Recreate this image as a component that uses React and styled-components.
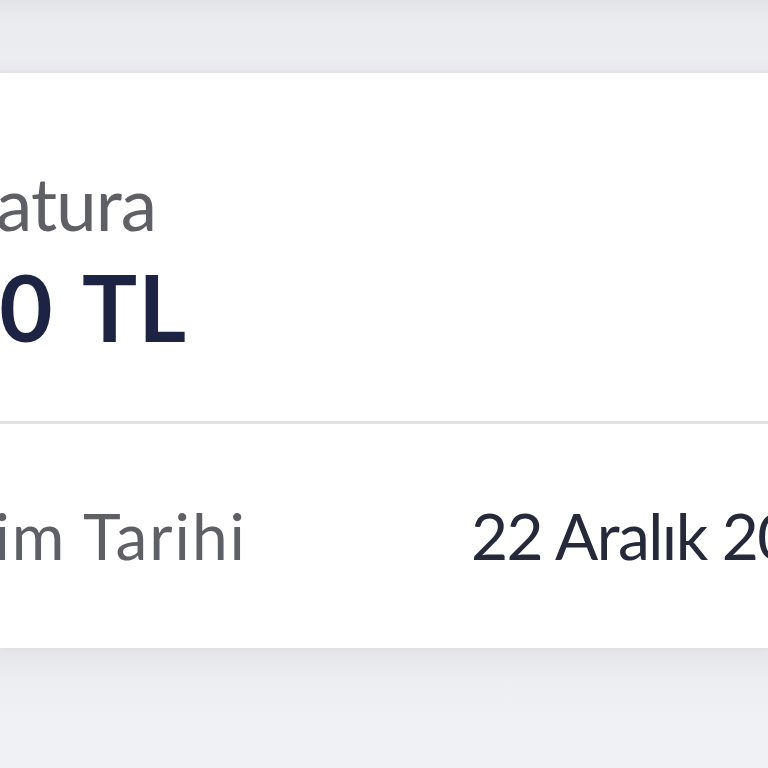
import React from "react";
import styled, { createGlobalStyle } from "styled-components";

const Global = createGlobalStyle`
  html, body { margin: 0; padding: 0; }
  body { background: #eff0f4; font-family: Lato, "Noto Sans", sans-serif; }
`;

const Page = styled.div`
  width: 768px;
  height: 768px;
  overflow: hidden;
  background: linear-gradient(#e3e4e8 0px, #eaebef 20px, #ecedf1 60px, #e8e8ec 73px, #e6e6ea 650px, #eceef2 680px, #f0f1f5 720px);
  display: flex;
  flex-direction: column;
`;

const TopBand = styled.div`
  height: 73px;
  flex: none;
`;

const Card = styled.section`
  flex: none;
  background: #ffffff;
  box-shadow: 0 0 6px rgba(30, 32, 50, 0.06);
  display: flex;
  flex-direction: column;
`;

const Header = styled.div`
  padding: 94px 0 68px;
  display: flex;
  flex-direction: column;
  gap: 21px;
`;

const Label = styled.div`
  font-size: ${(p) => p.$size}px;
  letter-spacing: ${(p) => p.$track}px;
  line-height: 1;
  color: #5f6066;
  white-space: nowrap;
  margin-left: ${(p) => p.$shift}px;
`;

const Amount = styled.div`
  font-size: 92px;
  letter-spacing: 1px;
  word-spacing: 8px;
  line-height: 1;
  font-weight: 700;
  color: #1d2342;
  white-space: nowrap;
  margin-left: ${(p) => p.$shift}px;
`;

const Divider = styled.hr`
  margin: 0;
  border: none;
  height: 3px;
  background: #e2e3e8;
`;

const Row = styled.div`
  height: 224px;
  display: flex;
  align-items: center;
  white-space: nowrap;
`;

const Value = styled.div`
  font-size: 64px;
  letter-spacing: -1.5px;
  line-height: 1;
  color: #262939;
  white-space: nowrap;
  margin-left: ${(p) => p.$gap}px;
`;

export default function App() {
  return (
    <>
      <Global />
      <Page>
        <TopBand />
        <Card>
          <Header>
            <Label $size={73} $track={-1} $shift={-39}>Fatura</Label>
            <Amount $shift={-318}>1.250,00 TL</Amount>
          </Header>
          <Divider />
          <Row>
            <Label $size={64} $track={2} $shift={-113}>Kesim Tarihi</Label>
            <Value $gap={224}>22 Aralık 2024</Value>
          </Row>
        </Card>
      </Page>
    </>
  );
}
